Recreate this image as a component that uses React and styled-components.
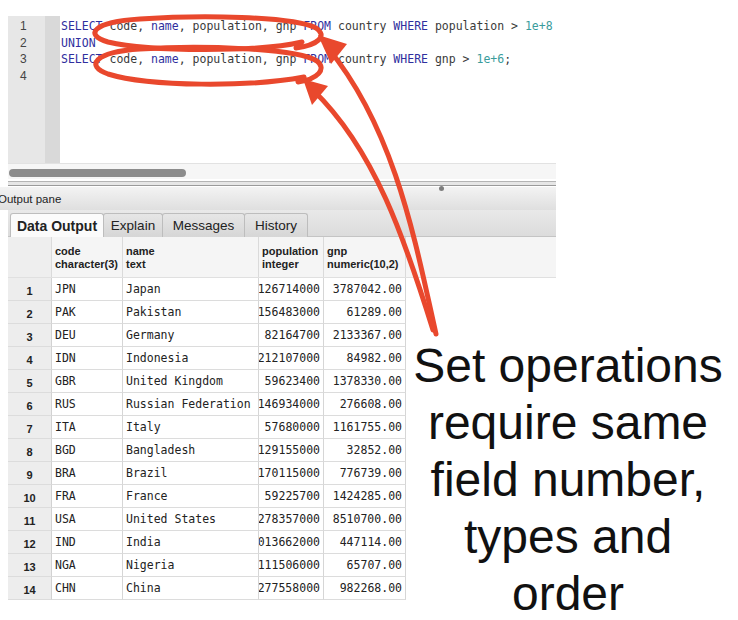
import React from 'react'
import styled, { createGlobalStyle } from 'styled-components';

const GlobalStyle = createGlobalStyle`
  body {
    margin: 0;
    background: #ffffff;
  }
`

const codeLines = [
  [['k', 'SELECT'], ['t', ' code, '], ['k', 'name'], ['t', ', population, gnp '], ['k', 'FROM'], ['t', ' country '], ['k', 'WHERE'], ['t', ' population > '], ['n', '1e+8']],
  [['k', 'UNION']],
  [['k', 'SELECT'], ['t', ' code, '], ['k', 'name'], ['t', ', population, gnp '], ['k', 'FROM'], ['t', ' country '], ['k', 'WHERE'], ['t', ' gnp > '], ['n', '1e+6'], ['t', ';']],
  [],
]

const rows = [
  ['JPN', 'Japan', '126714000', '3787042.00'],
  ['PAK', 'Pakistan', '156483000', '61289.00'],
  ['DEU', 'Germany', '82164700', '2133367.00'],
  ['IDN', 'Indonesia', '212107000', '84982.00'],
  ['GBR', 'United Kingdom', '59623400', '1378330.00'],
  ['RUS', 'Russian Federation', '146934000', '276608.00'],
  ['ITA', 'Italy', '57680000', '1161755.00'],
  ['BGD', 'Bangladesh', '129155000', '32852.00'],
  ['BRA', 'Brazil', '170115000', '776739.00'],
  ['FRA', 'France', '59225700', '1424285.00'],
  ['USA', 'United States', '278357000', '8510700.00'],
  ['IND', 'India', '1013662000', '447114.00'],
  ['NGA', 'Nigeria', '111506000', '65707.00'],
  ['CHN', 'China', '1277558000', '982268.00'],
]

const columns = [
  ['code', 'character(3)'],
  ['name', 'text'],
  ['population', 'integer'],
  ['gnp', 'numeric(10,2)'],
]

const tabs = [
  ['Data Output', 94],
  ['Explain', 60],
  ['Messages', 83],
  ['History', 64],
]

function App() {
  return (
    <Slide>
      <GlobalStyle />
      <Editor>
        <Gutter>
          {codeLines.map((_, i) => <LineNo key={i}>{i + 1}</LineNo>)}
        </Gutter>
        <FoldMargin />
        <Code>
          {codeLines.map((line, i) => (
            <CodeLine key={i}>
              {line.map(([kind, text], j) => <Token key={j} kind={kind}>{text}</Token>)}
            </CodeLine>
          ))}
        </Code>
      </Editor>
      <ScrollTrack>
        <ScrollThumb />
      </ScrollTrack>
      <Splitter>
        <Grip />
      </Splitter>
      <PaneTitle>Output pane</PaneTitle>
      <TabStrip>
        {tabs.map(([label, w], i) => (
          <Tab key={label} active={i === 0} width={w}>{label}</Tab>
        ))}
      </TabStrip>
      <HeaderRow>
        <CornerCell />
        {columns.map(([name, type]) => (
          <HeadCell key={name}>
            <span>{name}</span>
            <span>{type}</span>
          </HeadCell>
        ))}
      </HeaderRow>
      <Lower>
        <Grid>
          {rows.map((r, i) => (
            <React.Fragment key={r[0]}>
              <RowNo>{i + 1}</RowNo>
              <Cell>{r[0]}</Cell>
              <Cell>{r[1]}</Cell>
              <Cell right><span>{r[2]}</span></Cell>
              <Cell right><span>{r[3]}</span></Cell>
            </React.Fragment>
          ))}
        </Grid>
        <Caption>
          Set operations require same field number, types and order
        </Caption>
      </Lower>

      <Marks viewBox="0 0 738 620" width="738" height="620">
        <g fill="none" stroke="#e9482d" strokeWidth="5" strokeLinecap="round">
          <path d="M 302 42 C 260 52, 150 52, 108 42 C 84 35, 92 22, 140 19 C 200 15, 292 16, 316 28 C 328 36, 318 45, 296 48" />
          <path d="M 304 77 C 250 87, 150 87, 108 74 C 85 66, 94 52, 140 49 C 200 45, 296 48, 317 61 C 327 69, 318 79, 298 82" />
          <path d="M 436 334 C 415 240, 395 130, 328 48" />
          <path d="M 433 330 C 405 240, 375 150, 313 90" />
        </g>
        <g fill="#e9482d">
          <polygon points="318,35 347,44 331,64" />
          <polygon points="303,79 328,86 312,105" />
        </g>
      </Marks>
    </Slide>
  )
}

const Slide = styled.div`
  position: relative;
  width: 738px;
  height: 620px;
  padding: 16px 0 0 8px;
  box-sizing: border-box;
  overflow: hidden;
`

const Editor = styled.div`
  display: flex;
  width: 548px;
  height: 147px;
  background: #ffffff;
`

const Gutter = styled.div`
  width: 37px;
  padding-top: 2px;
  background: #e7e7e7;
  box-sizing: border-box;
`

const LineNo = styled.div`
  height: 16.6px;
  line-height: 16.6px;
  padding-left: 12px;
  font-family: "Liberation Sans", sans-serif;
  font-size: 12px;
  color: #444;
`

const FoldMargin = styled.div`
  width: 15px;
  background: #d9d9d9;
`

const Code = styled.div`
  flex: 1;
  padding: 2px 0 0 1px;
`

const CodeLine = styled.div`
  height: 16.6px;
  line-height: 16.6px;
  font-family: "DejaVu Sans Mono", monospace;
  font-size: 11.5px;
  white-space: pre;
  color: #3a3a3a;
`

const tokenColors = { k: '#2f2f9e', n: '#3a9c9c', t: '#3a3a3a' }

const Token = styled.span`
  color: ${p => tokenColors[p.kind]};
`

const ScrollTrack = styled.div`
  width: 548px;
  height: 16px;
  padding: 5px 0 0 1px;
  box-sizing: border-box;
  background: #f6f6f6;
  border-top: 1px solid #e2e2e2;
`

const ScrollThumb = styled.div`
  width: 177px;
  height: 8px;
  border-radius: 4px;
  background: #8c8c8c;
`

const Splitter = styled.div`
  position: relative;
  width: 548px;
  height: 3px;
  margin-top: 2px;
  border-top: 1px solid #b4b4b4;
  border-bottom: 1px solid #9a9a9a;
  background: #e6e6e6;
`

const Grip = styled.div`
  position: absolute;
  left: 431px;
  top: 4px;
  width: 5px;
  height: 5px;
  border-radius: 50%;
  background: #7d7d7d;
`

const PaneTitle = styled.div`
  width: 556px;
  height: 23px;
  margin-left: -8px;
  margin-top: 1px;
  text-indent: -2px;
  line-height: 24px;
  font-family: "Liberation Sans", sans-serif;
  font-size: 11.5px;
  color: #1d1d1d;
  background: linear-gradient(#f3f3f3, #dfdfdf);
`

const TabStrip = styled.div`
  display: flex;
  width: 548px;
  height: 27px;
  padding: 3px 0 0 2px;
  box-sizing: border-box;
  background: linear-gradient(#e9e9e9, #dcdcdc);
  border-bottom: 1px solid #c4c4c4;
`

const Tab = styled.div`
  display: flex;
  align-items: center;
  justify-content: center;
  width: ${p => p.width}px;
  height: 24px;
  box-sizing: border-box;
  white-space: nowrap;
  font-family: "Liberation Sans", sans-serif;
  font-size: ${p => (p.active ? '14px' : '13.5px')};
  font-weight: ${p => (p.active ? 700 : 400)};
  color: #222;
  border: 1px solid #bdbdbd;
  border-bottom: none;
  border-radius: 3px 3px 0 0;
  background: ${p => (p.active ? '#fbfbfb' : 'linear-gradient(#e6e6e6, #d6d6d6)')};
  margin-right: -1px;
`

const HeaderRow = styled.div`
  display: grid;
  grid-template-columns: 44px 71px 136px 65px 82px;
  width: 548px;
  height: 41px;
  background: #f5f5f5;
  border-bottom: 1px solid #e0e0e0;
  box-sizing: border-box;
`

const CornerCell = styled.div`
  background: #eeeeee;
  border-right: 1px solid #dadada;
`

const HeadCell = styled.div`
  display: flex;
  flex-direction: column;
  justify-content: center;
  padding: 2px 0 0 3px;
  border-right: 1px solid #dadada;
  font-family: "Liberation Sans", sans-serif;
  font-size: 11px;
  font-weight: 700;
  line-height: 13px;
  color: #222;
  white-space: nowrap;
`

const Lower = styled.div`
  display: flex;
  margin-left: -8px;
`

const Grid = styled.div`
  display: grid;
  grid-template-columns: 44px 71px 136px 65px 82px;
  grid-auto-rows: 23px;
  margin-left: 8px;
  align-self: flex-start;
`

const RowNo = styled.div`
  display: flex;
  align-items: center;
  justify-content: center;
  padding-top: 3px;
  background: #ededed;
  border-bottom: 1px solid #dcdcdc;
  border-right: 1px solid #d2d2d2;
  font-family: "Liberation Sans", sans-serif;
  font-size: 11px;
  font-weight: 700;
  color: #222;
`

const Cell = styled.div`
  display: flex;
  align-items: center;
  justify-content: ${p => (p.right ? 'flex-end' : 'flex-start')};
  padding: ${p => (p.right ? '0 3px 0 0' : '0 0 0 3px')};
  overflow: hidden;
  white-space: pre;
  border-bottom: 1px solid #dcdcdc;
  border-right: 1px solid #d6d6d6;
  font-family: "DejaVu Sans Mono", monospace;
  font-size: 11.5px;
  color: #222;
  & > span { flex-shrink: 0; }
`

const Caption = styled.div`
  flex: none;
  width: 324px;
  padding-top: 59px;
  text-align: center;
  font-family: "Liberation Sans", sans-serif;
  font-size: 48px;
  line-height: 57px;
  color: #111;
`

const Marks = styled.svg`
  position: absolute;
  left: 0;
  top: 0;
  pointer-events: none;
`

export default App
